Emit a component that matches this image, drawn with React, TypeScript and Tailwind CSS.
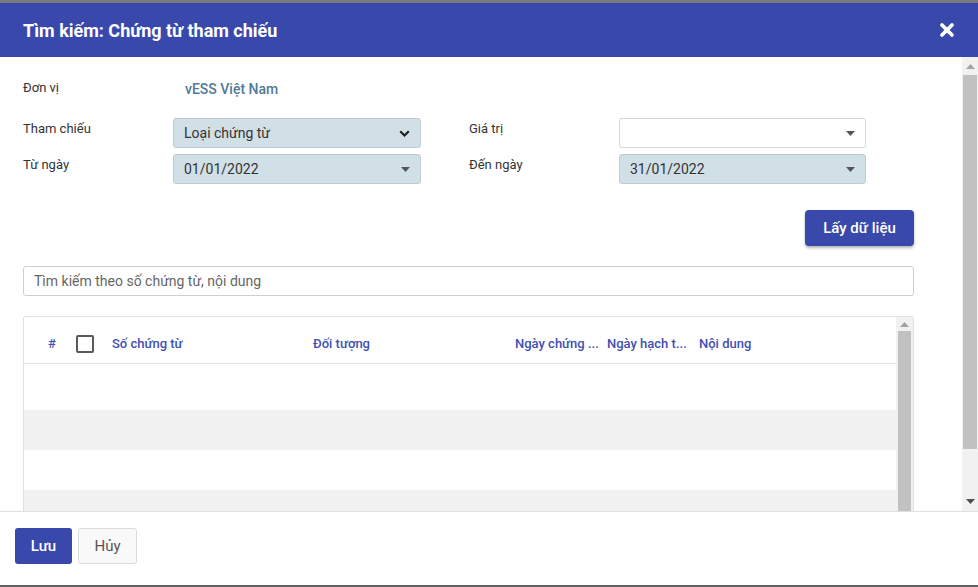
import { X } from "lucide-react";

function Caret() {
  return (
    <svg width="9" height="5" viewBox="0 0 9 5" className="shrink-0">
      <path d="M0 0h9L4.5 5z" fill="#555" />
    </svg>
  );
}

function Chevron() {
  return (
    <svg width="11" height="7" viewBox="0 0 11 7" className="shrink-0">
      <path d="M1.2 1.2l4.3 4.3 4.3-4.3" fill="none" stroke="#222" strokeWidth="2.2" />
    </svg>
  );
}

function Field({ value, filled = true, chevron = false }: { value?: string; filled?: boolean; chevron?: boolean }) {
  return (
    <div
      className={`flex h-[30px] items-center justify-between rounded-[3px] border pl-[10px] pr-[10px] text-[14px] text-[#333] ${
        filled ? "border-[#bfcbd2] bg-[#d1dfe6]" : "border-[#d6d6d6] bg-white"
      }`}
    >
      <span>{value}</span>
      {chevron ? <Chevron /> : <Caret />}
    </div>
  );
}

const rowGrid = "grid grid-cols-[150px_248px_48px_150px_247px] items-start text-[13px] leading-[15px] text-[#333]";

export default function App() {
  const rows = [46, 40, 40, 40];
  return (
    <div className="flex h-[587px] w-[978px] flex-col overflow-hidden bg-[#5f5f5f] font-['Roboto',sans-serif]">
      <div className="h-[3px] bg-[#7a7a7a]" />
      <div className="flex flex-1 flex-col bg-white">
        <header className="flex h-[54px] shrink-0 items-center justify-between bg-[#3949ab] pl-[23px] pr-[21px]">
          <h1 className="text-[18px] font-bold text-white">Tìm kiếm: Chứng từ tham chiếu</h1>
          <X className="h-[20px] w-[20px] text-white" strokeWidth={4.5} />
        </header>

        <div className="flex h-[454px] shrink-0">
          <div className="flex-1 overflow-hidden pl-[23px] pr-[48px]">
            <div className={`${rowGrid} mt-[23px] h-[20px]`}>
              <div>Đơn vị</div>
              <div className="pl-[12px] pt-[2px] text-[14px] font-medium text-[#4f7a98]">vESS Việt Nam</div>
            </div>

            <div className={`${rowGrid} mt-[18px]`}>
              <div className="pt-[3px]">Tham chiếu</div>
              <Field value="Loại chứng từ" chevron />
              <div />
              <div className="pt-[3px]">Giá trị</div>
              <Field filled={false} />
            </div>

            <div className={`${rowGrid} mt-[6px]`}>
              <div className="pt-[3px]">Từ ngày</div>
              <Field value="01/01/2022" />
              <div />
              <div className="pt-[3px]">Đến ngày</div>
              <Field value="31/01/2022" />
            </div>

            <div className="mt-[26px] flex justify-end">
              <button className="h-[36px] w-[109px] rounded-[4px] bg-[#3949ab] text-[15px] font-medium text-white shadow-[0_2px_3px_rgba(0,0,0,0.3)]">
                Lấy dữ liệu
              </button>
            </div>

            <div className="mt-[20px] flex h-[30px] items-center rounded-[3px] border border-[#cfcfcf] px-[10px] text-[14px] text-[#666]">
              Tìm kiếm theo số chứng từ, nội dung
            </div>

            <div className="mt-[20px] flex h-[200px] rounded-t-[3px] border border-b-0 border-[#e0e0e0]">
              <div className="flex-1">
                <div className="flex h-[47px] items-center border-b border-[#e0e0e0] pt-[8px] text-[13px] font-medium text-[#3f4fb5]">
                  <div className="w-[52px] pl-[24px]">#</div>
                  <div className="w-[36px]">
                    <div className="h-[18px] w-[18px] rounded-[2px] border-2 border-[#5a5a5a]" />
                  </div>
                  <div className="w-[201px]">Số chứng từ</div>
                  <div className="w-[202px]">Đối tượng</div>
                  <div className="w-[92px]">Ngày chứng ...</div>
                  <div className="w-[92px]">Ngày hạch t...</div>
                  <div>Nội dung</div>
                </div>
                {rows.map((h, i) => (
                  <div key={i} className={i % 2 ? "bg-[#f1f1f1]" : "bg-white"} style={{ height: h }} />
                ))}
              </div>
              <div className="flex w-[17px] flex-col items-center bg-[#f1f1f1] pt-[5px]">
                <svg width="9" height="5" viewBox="0 0 9 5">
                  <path d="M4.5 0L9 5H0z" fill="#a3a3a3" />
                </svg>
                <div className="mt-[4px] w-[13px] flex-1 bg-[#c1c1c1]" />
              </div>
            </div>
          </div>

          <div className="flex w-[16px] flex-col items-center bg-[#f1f1f1] pt-[7px] pb-[7px]">
            <svg width="9" height="5" viewBox="0 0 9 5">
              <path d="M4.5 0L9 5H0z" fill="#a3a3a3" />
            </svg>
            <div className="mt-[6px] h-[374px] w-[14px] bg-[#c1c1c1]" />
            <div className="flex-1" />
            <svg width="9" height="5" viewBox="0 0 9 5">
              <path d="M0 0h9L4.5 5z" fill="#505050" />
            </svg>
          </div>
        </div>

        <footer className="flex flex-1 items-start gap-[6px] border-t border-[#e0e0e0] pl-[15px] pt-[16px]">
          <button className="h-[36px] w-[57px] rounded-[3px] bg-[#3949ab] text-[15px] font-medium text-white">Lưu</button>
          <button className="h-[36px] w-[59px] rounded-[3px] border border-[#dcdcdc] bg-[#f9f9f9] text-[15px] text-[#555]">
            Hủy
          </button>
        </footer>
      </div>
      <div className="h-[2px] bg-[#5f5f5f]" />
    </div>
  );
}
